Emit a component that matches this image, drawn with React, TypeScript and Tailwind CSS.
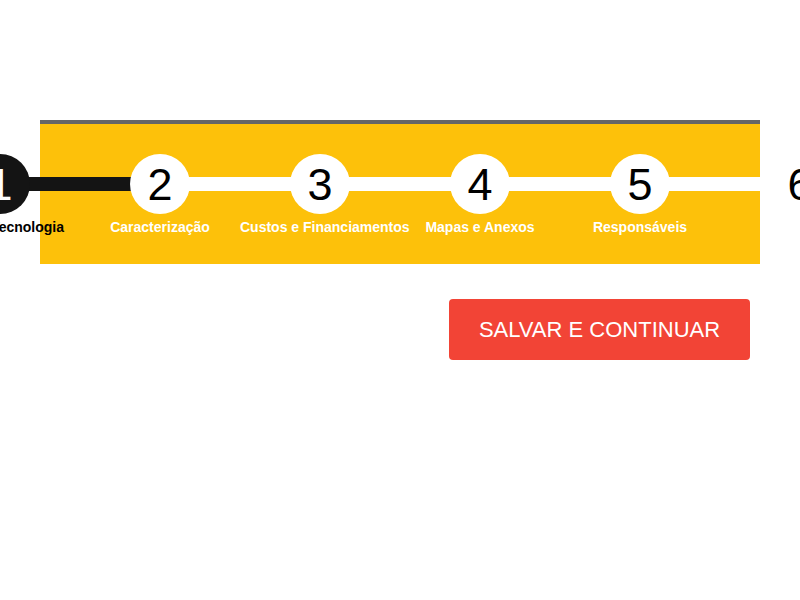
const steps = [
  { n: 1, label: 'Sobre a Tecnologia' },
  { n: 2, label: 'Caracterização' },
  { n: 3, label: 'Custos e Financiamentos' },
  { n: 4, label: 'Mapas e Anexos' },
  { n: 5, label: 'Responsáveis' },
  { n: 6, label: 'Finalizar' },
]

const current = 1

export default function App() {
  return (
    <div className="w-full h-[600px] bg-white overflow-hidden font-['Liberation_Sans',Arial,sans-serif]">
      <div className="mx-[40px] pt-[120px]">
        {/* Stepper */}
        <div className="border-t-4 border-[#666666] bg-[#fdc10a] h-[144px]">
          <div className="flex ml-[-120px] pt-[30px]">
            {steps.map((s, i) => {
              const active = s.n === current
              const done = s.n <= current
              return (
                <div key={s.n} className="relative w-[160px] shrink-0 flex flex-col items-center">
                  {i < steps.length - 1 && (
                    <div
                      className={
                        done
                          ? 'absolute left-[80px] top-[23px] w-[160px] h-[14px] bg-[#141414]'
                          : 'absolute left-[80px] top-[23px] w-[160px] h-[14px] bg-white'
                      }
                    />
                  )}
                  <div
                    className={
                      active
                        ? 'relative w-[60px] h-[60px] rounded-full bg-[#141414] text-white flex items-center justify-center text-[45px] leading-none'
                        : 'relative w-[60px] h-[60px] rounded-full bg-white text-black flex items-center justify-center text-[45px] leading-none'
                    }
                  >
                    {s.n}
                  </div>
                  <div
                    className={
                      active
                        ? 'w-full mt-[5px] text-center text-[14px] leading-[16px] font-bold text-black whitespace-nowrap'
                        : 'w-full mt-[5px] text-center text-[14px] leading-[16px] font-bold text-white whitespace-nowrap'
                    }
                  >
                    {s.label}
                  </div>
                </div>
              )
            })}
          </div>
        </div>

        <div className="flex justify-end pr-[10px] mt-[35px]">
          <button className="w-[301px] h-[61px] rounded-[4px] bg-[#f24436] text-white text-[22px]">
            SALVAR E CONTINUAR
          </button>
        </div>
      </div>
    </div>
  )
}
